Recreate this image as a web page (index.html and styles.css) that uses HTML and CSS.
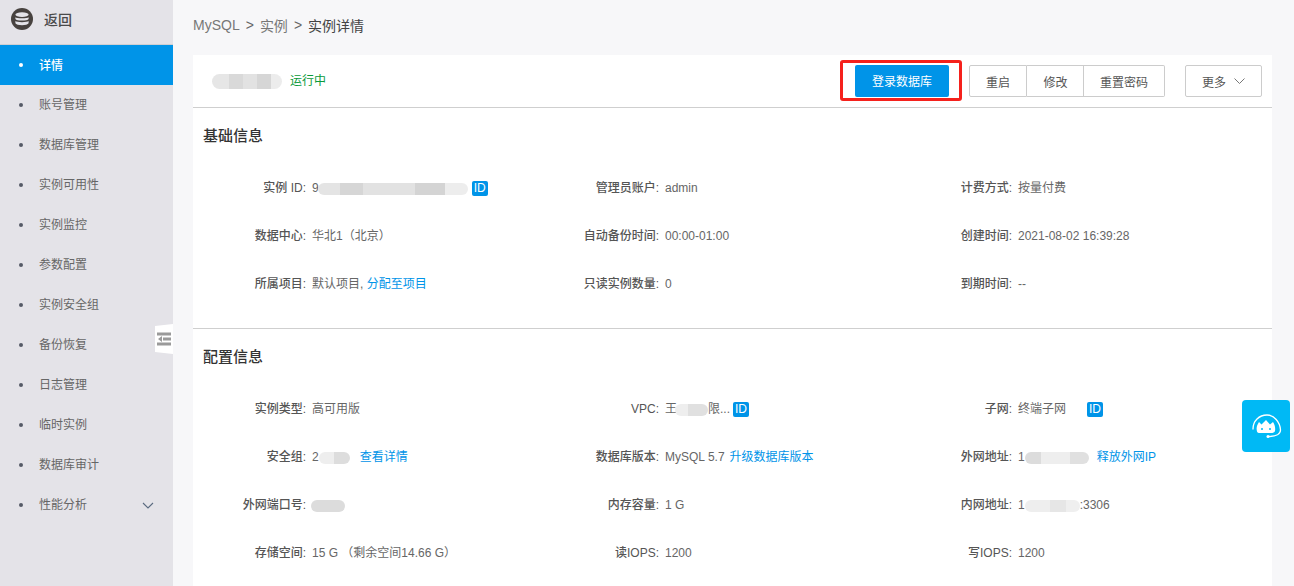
FILE: index.html
```html
<!DOCTYPE html>
<html lang="zh-CN">
<head>
<meta charset="utf-8">
<title>实例详情</title>
<link rel="stylesheet" href="styles.css">
</head>
<body>
<div class="app">
  <aside class="sidebar">
    <div class="back">
      <svg class="db-icon" width="22" height="22" viewBox="0 0 22 22"><circle cx="11" cy="11" r="11" fill="#47423f"/><ellipse cx="11" cy="6.6" rx="6.6" ry="2.4" fill="#e4e3e8"/><path d="M4.4 9.2c1 1.5 12.2 1.5 13.2 0v1.8c-1 2-12.2 2-13.2 0zM4.4 13c1 1.5 12.2 1.5 13.2 0v2.2c-1 2.6-12.2 2.6-13.2 0z" fill="#e4e3e8"/></svg>
      <span>返回</span>
    </div>
    <ul class="menu">
      <li class="item active">详情</li>
      <li class="item">账号管理</li>
      <li class="item">数据库管理</li>
      <li class="item">实例可用性</li>
      <li class="item">实例监控</li>
      <li class="item">参数配置</li>
      <li class="item">实例安全组</li>
      <li class="item">备份恢复</li>
      <li class="item">日志管理</li>
      <li class="item">临时实例</li>
      <li class="item">数据库审计</li>
      <li class="item">性能分析<svg class="menu-chev" width="12" height="7" viewBox="0 0 12 7"><path d="M1 1l5 5 5-5" fill="none" stroke="#5b6b80" stroke-width="1.1"/></svg></li>
    </ul>
    <div class="collapse">
      <svg width="14" height="14" viewBox="0 0 14 14"><path d="M0 .5h14V3.500H0zM0 10.500h14v3H0zM6 5.500h8v3H6zM1 7l4-3v6z" fill="#9a9a9a"/></svg>
    </div>
  </aside>
  <main class="main">
    <nav class="crumbs"><span>MySQL</span><span class="sep">&gt;</span><span>实例</span><span class="sep">&gt;</span><span class="current">实例详情</span></nav>
    <section class="card">
      <header class="head">
        <div class="head-left">
          <span class="blur blur-name"></span>
          <span class="status">运行中</span>
        </div>
        <div class="head-actions">
          <div class="highlight"><button class="btn-primary">登录数据库</button></div>
          <div class="btn-group"><button class="btn b1">重启</button><button class="btn b2">修改</button><button class="btn b3">重置密码</button></div>
          <button class="btn more">更多<svg width="11" height="6" viewBox="0 0 11 6"><path d="M.5.5l5 5 5-5" fill="none" stroke="#777" stroke-width="1"/></svg></button>
        </div>
      </header>
      <div class="section first">
        <h2 class="title">基础信息</h2>
        <div class="grid">
          <div class="row"><span class="key">实例 ID:</span><span class="val">9<span class="blur blur-id"></span><span class="tag">ID</span></span></div>
          <div class="row"><span class="key">管理员账户:</span><span class="val">admin</span></div>
          <div class="row"><span class="key">计费方式:</span><span class="val">按量付费</span></div>
          <div class="row"><span class="key">数据中心:</span><span class="val">华北1（北京）</span></div>
          <div class="row"><span class="key">自动备份时间:</span><span class="val">00:00-01:00</span></div>
          <div class="row"><span class="key">创建时间:</span><span class="val">2021-08-02 16:39:28</span></div>
          <div class="row"><span class="key">所属项目:</span><span class="val">默认项目, <a class="link">分配至项目</a></span></div>
          <div class="row"><span class="key">只读实例数量:</span><span class="val">0</span></div>
          <div class="row"><span class="key">到期时间:</span><span class="val">--</span></div>
        </div>
      </div>
      <div class="section second">
        <h2 class="title">配置信息</h2>
        <div class="grid">
          <div class="row"><span class="key">实例类型:</span><span class="val">高可用版</span></div>
          <div class="row"><span class="key">VPC:</span><span class="val">王<span class="blur blur-vpc"></span>限...<span class="tag tag-near">ID</span></span></div>
          <div class="row"><span class="key">子网:</span><span class="val">终端子网<span class="tag tag-far">ID</span></span></div>
          <div class="row"><span class="key">安全组:</span><span class="val">2<span class="blur blur-sg"></span><a class="link link-sg">查看详情</a></span></div>
          <div class="row"><span class="key">数据库版本:</span><span class="val">MySQL 5.7<a class="link link-db">升级数据库版本</a></span></div>
          <div class="row"><span class="key">外网地址:</span><span class="val">1<span class="blur blur-ip"></span><a class="link link-ip">释放外网IP</a></span></div>
          <div class="row"><span class="key">外网端口号:</span><span class="val"><span class="blur blur-port"></span></span></div>
          <div class="row"><span class="key">内存容量:</span><span class="val">1 G</span></div>
          <div class="row"><span class="key">内网地址:</span><span class="val">1<span class="blur blur-ip2"></span>:3306</span></div>
          <div class="row"><span class="key">存储空间:</span><span class="val">15 G （剩余空间14.66 G）</span></div>
          <div class="row"><span class="key">读IOPS:</span><span class="val">1200</span></div>
          <div class="row"><span class="key">写IOPS:</span><span class="val">1200</span></div>
        </div>
      </div>
    </section>
  </main>
  <div class="float">
    <svg width="48" height="52" viewBox="0 0 48 52"><path d="M11 29C11 21 17 15 25 15c7 0 13 7 13.500 15 0 4-4.500 6.500-11.500 6.500" fill="none" stroke="#fff" stroke-width="1.300" stroke-linecap="round"/><circle cx="26" cy="36.500" r="1.500" fill="#fff"/><path d="M15 31.500c-1-3.500 0-6.500 2-9.500l2.500 2.500L24 20l4 4.500 3-2.500c2 3 2.500 6 2 9-.500 1.500-2 2-4 2H18c-1.500 0-2.700-.3-3-1.500z" fill="#fff"/><circle cx="20" cy="29" r="1" fill="#00b9f5"/><circle cx="28" cy="29" r="1" fill="#00b9f5"/></svg>
  </div>
</div>
</body>
</html>
```
FILE: styles.css
```css
* { box-sizing: border-box; }
html, body { margin: 0; padding: 0; height: 100%; overflow: hidden; }
body {
  font-family: "Liberation Sans", "Noto Sans CJK SC", sans-serif;
  font-size: 12px;
  color: #555;
  background: #f7f7f9;
}
.app { display: flex; height: 586px; position: relative; overflow: hidden; }

.sidebar { width: 173px; flex: none; background: #e4e3e8; position: relative; }
.back {
  height: 45px;
  display: flex;
  align-items: center;
  gap: 11px;
  padding: 0 0 6px 11px;
  border-bottom: 1px solid #cfcfd2;
  font-size: 14px;
  font-weight: 500;
  color: #4a4a4a;
}
.menu { list-style: none; margin: 0; padding: 0; }
.item {
  height: 40px;
  line-height: 40px;
  padding-left: 39px;
  position: relative;
  color: #666;
}
.item::before {
  content: "";
  position: absolute;
  left: 19px;
  top: 18px;
  width: 4px;
  height: 4px;
  border-radius: 50%;
  background: #555a66;
}
.item.active { background: #0094e8; color: #fff; font-weight: 500; line-height: 42px; }
.item.active::before { background: #fff; }
.menu-chev { position: absolute; right: 19px; top: 17px; }
.collapse {
  position: absolute;
  left: 155px;
  top: 324px;
  width: 18px;
  height: 30px;
  background: #fff;
  clip-path: polygon(0 2px, 100% 0, 100% 100%, 0 calc(100% - 2px));
  display: flex;
  align-items: center;
  justify-content: center;
}

.main { flex: 1; padding: 0 22px 0 20px; min-width: 0; }
.crumbs {
  height: 55px;
  padding-bottom: 6px;
  display: flex;
  align-items: center;
  gap: 6px;
  font-size: 14px;
  color: #777;
}
.crumbs .sep { color: #666; }
.crumbs .current { color: #444; }

.card { background: #fff; height: 531px; }
.head {
  height: 53px;
  border-bottom: 1px solid #cfcfcf;
  display: flex;
  justify-content: space-between;
  align-items: center;
  padding: 0 10px 0 19px;
}
.head-left { display: flex; align-items: center; gap: 8px; }
.status { color: #0a9a3a; line-height: 14px; }
.head-actions { display: flex; align-items: center; }
.highlight {
  width: 122px;
  height: 41px;
  border: 3px solid #f5211c;
  border-radius: 3px;
  margin-right: 7px;
  padding-left: 2px;
  display: flex;
  align-items: center;
  justify-content: center;
  margin-top: -1px;
}
.btn-primary {
  width: 94px;
  height: 32px;
  border: 0;
  border-radius: 2px;
  background: #0094e8;
  color: #fff;
  font: inherit;
  padding: 0;
}
.btn {
  height: 32px;
  border: 1px solid #ccc;
  background: #fff;
  color: #555;
  font: inherit;
  padding: 0;
}
.btn-group { display: flex; margin-right: 20px; }
.b1 { width: 58px; border-radius: 2px 0 0 2px; }
.b2 { width: 57px; border-left: 0; padding-left: 1px; }
.b3 { width: 81px; border-left: 0; border-radius: 0 2px 2px 0; }
.more {
  width: 77px;
  border-radius: 2px;
  display: flex;
  align-items: center;
  justify-content: center;
  gap: 8px;
}

.section { padding-right: 20px; }
.first { height: 220px; }
.second { border-top: 1px solid #cfcfcf; }
.title {
  margin: 0;
  height: 55px;
  line-height: 55px;
  padding-left: 10px;
  font-size: 15px;
  font-weight: 500;
  color: #333;
}
.grid {
  display: grid;
  grid-template-columns: repeat(3, 353px);
  grid-auto-rows: 48px;
}
.row { display: flex; height: 48px; line-height: 50px; white-space: nowrap; }
.key { width: 113px; text-align: right; flex: none; color: #555; font-weight: 500; }
.val { margin-left: 6px; color: #666; }
.link { color: #0094e8; }
.link-sg { margin-left: 10px; }
.link-db { margin-left: 5px; }
.link-ip { margin-left: 8px; }
.tag {
  display: inline-block;
  vertical-align: middle;
  width: 16px;
  height: 15px;
  line-height: 15px;
  text-align: center;
  background: #0094e8;
  color: #fff;
  border-radius: 2px;
  margin-left: 4px;
  font-size: 12px;
}
.tag-near { margin-left: 3px; }
.tag-far { margin-left: 21px; }
.blur { display: inline-block; vertical-align: middle; height: 12px; background: #e2e2e2; border-radius: 6px; }
.blur-name { width: 70px; height: 15px; border-radius: 8px; background: linear-gradient(90deg,#e6e6e6 0 25%,#d9d9d9 25% 45%,#e2e2e2 45% 65%,#d6d6d6 65% 85%,#ececec 85%); }
.blur-id { width: 150px; margin-left: -1px; background: linear-gradient(90deg,#e4e4e4 0 15%,#d6d6d6 15% 30%,#e2e2e2 30% 65%,#d4d4d4 65% 85%,#ededed 85%); }
.blur-vpc { width: 33px; margin-left: -2px; background: linear-gradient(90deg,#eee 0 40%,#e0e0e0 40%); }
.blur-sg { width: 31px; background: linear-gradient(90deg,#eee 0 50%,#ddd 50%); }
.blur-ip { width: 64px; background: linear-gradient(90deg,#dcdcdc 0 25%,#eee 25% 70%,#e0e0e0 70%); }
.blur-ip2 { width: 55px; background: linear-gradient(90deg,#eee 0 45%,#e6e6e6 45% 75%,#efefef 75%); }
.blur-port { width: 34px; margin-left: -1px; background: #dcdcdc; }

.float {
  position: absolute;
  left: 1242px;
  top: 400px;
  width: 48px;
  height: 52px;
  background: #00b9f5;
  border-radius: 4px;
}
```
